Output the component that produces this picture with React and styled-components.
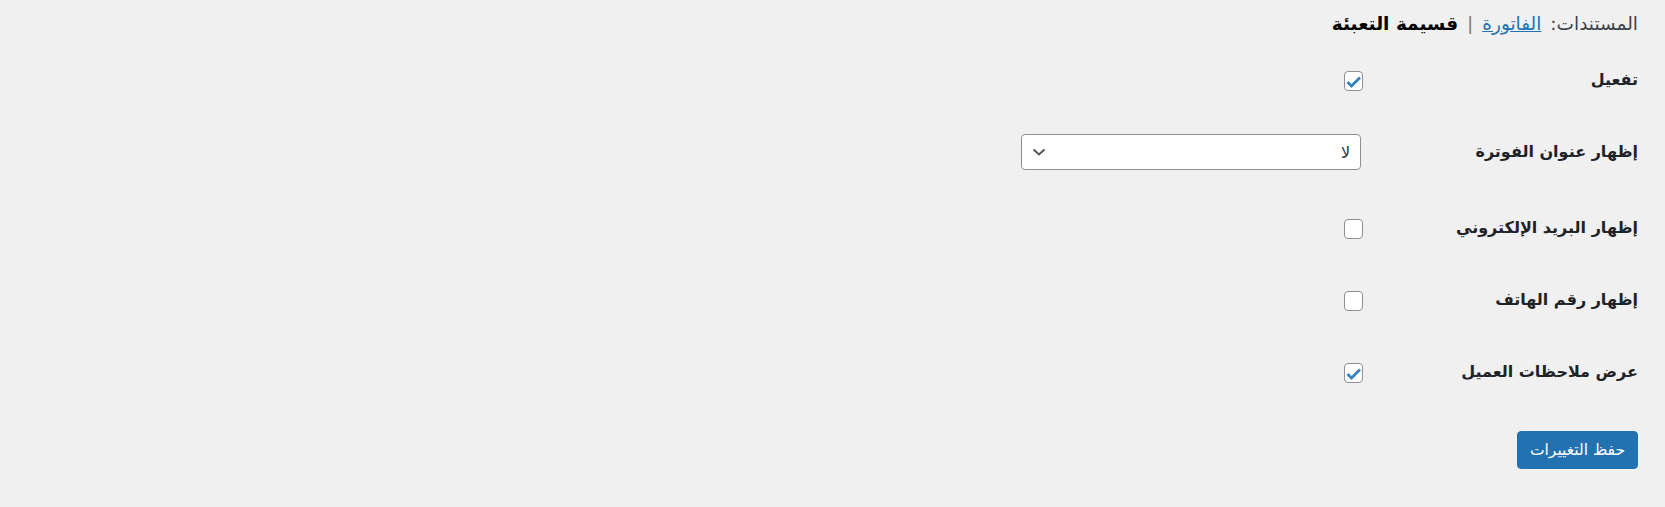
import React from "react";
import styled, { createGlobalStyle } from "styled-components";

const GlobalStyle = createGlobalStyle`
  html, body {
    margin: 0;
    padding: 0;
    background: #f0f0f1;
  }
  body {
    direction: rtl;
    color: #1d2327;
    font-family: Tahoma, "DejaVu Sans", sans-serif;
  }
`;

const Page = styled.div`
  padding: 12px 27px 0 0;
`;

const SubNav = styled.div`
  display: flex;
  align-items: center;
  gap: 9px;
  height: 24px;
  font-size: 18.5px;
  line-height: 24px;
  color: #3c434a;
`;

const NavLink = styled.a`
  color: #2271b1;
  text-decoration: underline;
`;

const Sep = styled.span`
  color: #787c82;
`;

const Current = styled.strong`
  color: #000;
  font-weight: 700;
`;

const FormTable = styled.div`
  margin-top: 9px;
`;

const Row = styled.div`
  display: flex;
  align-items: flex-start;
`;

const Label = styled.div`
  width: 263px;
  flex: none;
  padding: 24px 0 26px;
  line-height: 22px;
  font-size: 16px;
  font-weight: 700;
  color: #1d2327;
`;

const Field = styled.div`
  padding: 17px 12px 23px 0;
`;

const Box = styled.span`
  display: block;
  box-sizing: border-box;
  width: 19px;
  height: 20px;
  margin-top: 9px;
  border: 1px solid #8c8f94;
  border-radius: 4px;
  background: #fff;
  svg {
    display: block;
  }
`;

const Select = styled.div`
  box-sizing: border-box;
  width: 340px;
  height: 36px;
  margin-right: 2px;
  display: flex;
  align-items: center;
  justify-content: space-between;
  padding: 0 10px;
  border: 1px solid #8c8f94;
  border-radius: 4px;
  background: #fff;
  font-size: 16px;
  color: #2c3338;
`;

const Submit = styled.div`
  margin-top: 22px;
`;

const Button = styled.button`
  box-sizing: border-box;
  width: 121px;
  height: 38px;
  border: 1px solid #2271b1;
  border-radius: 4px;
  background: #2271b1;
  color: #fff;
  font-family: Tahoma, "DejaVu Sans", sans-serif;
  font-size: 15.5px;
  cursor: pointer;
`;

const Checkbox = ({ checked }) => (
  <Box role="checkbox" aria-checked={checked}>
    {checked && (
      <svg width="17" height="18" viewBox="0 0 17 18">
        <polyline
          points="2.5,10 6.5,14 15,5.5"
          fill="none"
          stroke="#3582c4"
          strokeWidth="2.8"
        />
      </svg>
    )}
  </Box>
);

const Chevron = () => (
  <svg width="14" height="10" viewBox="0 0 14 10">
    <polyline
      points="1.5,2.5 7,7.5 12.5,2.5"
      fill="none"
      stroke="#50575e"
      strokeWidth="2"
    />
  </svg>
);

const App = () => (
  <Page>
    <GlobalStyle />
    <SubNav>
      <span>المستندات:</span>
      <NavLink href="#">الفاتورة</NavLink>
      <Sep>|</Sep>
      <Current>قسيمة التعبئة</Current>
    </SubNav>
    <FormTable>
      <Row>
        <Label>تفعيل</Label>
        <Field>
          <Checkbox checked />
        </Field>
      </Row>
      <Row>
        <Label>إظهار عنوان الفوترة</Label>
        <Field>
          <Select>
            <span>لا</span>
            <Chevron />
          </Select>
        </Field>
      </Row>
      <Row>
        <Label>إظهار البريد الإلكتروني</Label>
        <Field>
          <Checkbox />
        </Field>
      </Row>
      <Row>
        <Label>إظهار رقم الهاتف</Label>
        <Field>
          <Checkbox />
        </Field>
      </Row>
      <Row>
        <Label>عرض ملاحظات العميل</Label>
        <Field>
          <Checkbox checked />
        </Field>
      </Row>
    </FormTable>
    <Submit>
      <Button>حفظ التغييرات</Button>
    </Submit>
  </Page>
);

export default App;
